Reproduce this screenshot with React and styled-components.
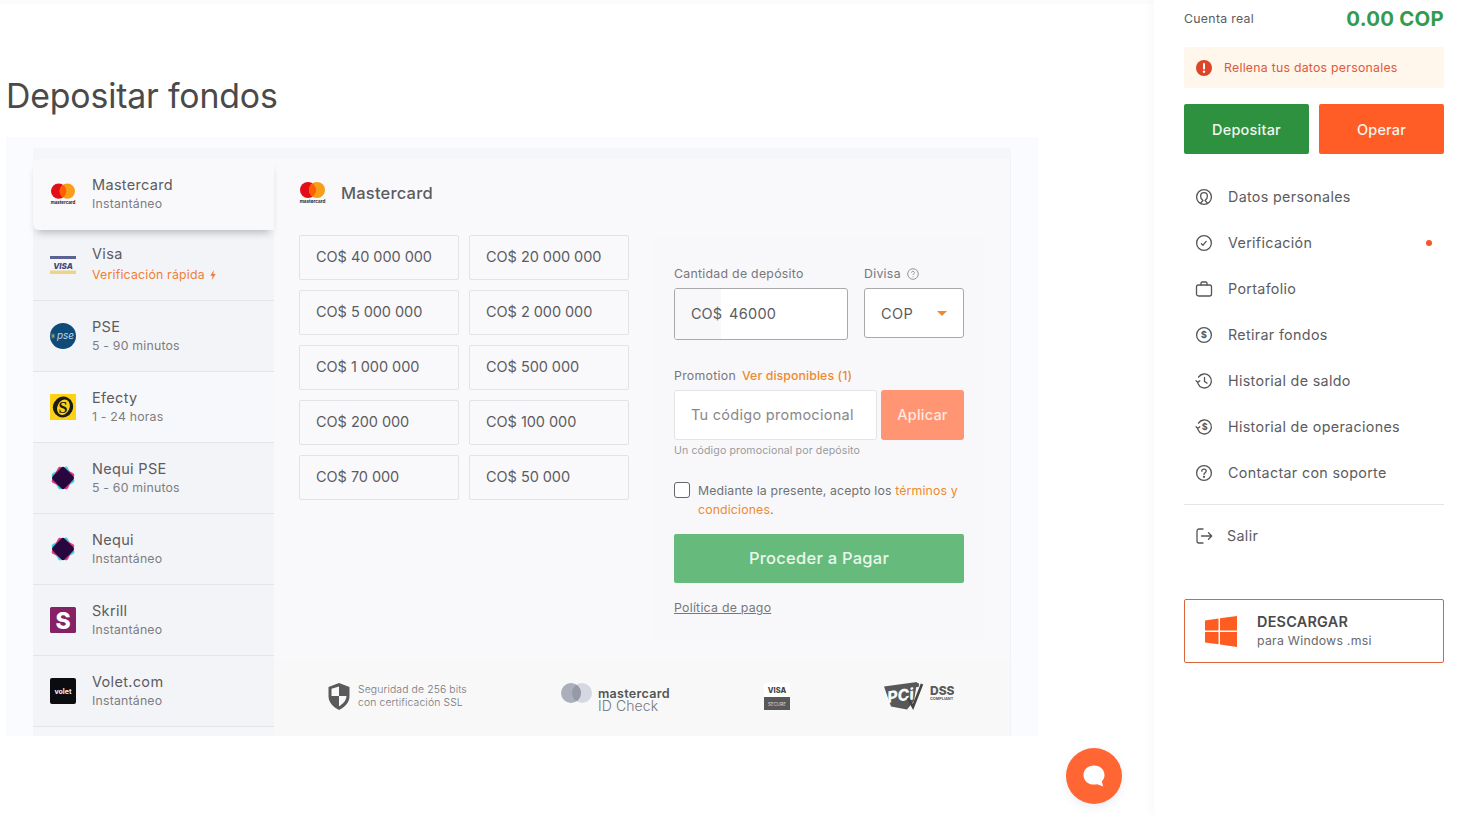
import React from "react";
import styled, { createGlobalStyle } from "styled-components";

const Global = createGlobalStyle`
  html, body { margin: 0; padding: 0; background: #fff; }
  body { font-family: Inter, "Open Sans", "Liberation Sans", sans-serif; color: #555; overflow: hidden; }
  * { box-sizing: border-box; }
`;

const Page = styled.div`display: flex; width: 1460px; height: 816px; overflow: hidden; position: relative; background: #fff;`;
const Main = styled.main`width: 1154px; flex: none; background: #fff;`;
const TopStrip = styled.div`height: 4px; background: #fbfbfb;`;
const Title = styled.h1`margin: 72px 0 21px 6px; height: 40px; font-size: 33.8px; line-height: 40px; font-weight: 400; letter-spacing: -0.15px; color: #4a4a4a;`;
const Outer = styled.section`margin-left: 6px; width: 1032px; height: 599px; background: #fafbfe; padding: 11px 27px 0;`;
const Inner = styled.div`display: flex; height: 588px; background: #f5f6f9; padding-top: 11px;`;

const MethodList = styled.div`width: 241px; flex: none; display: flex; flex-direction: column;`;
const Method = styled.div`
  height: 71px; flex: none; display: flex; align-items: center; gap: 16px; padding: 0 0 0 17px;
  background: ${p => (p.$active ? "#f9f9fc" : p.$light ? "#f7f8fb" : "#f3f4f8")};
  border-bottom: 1px solid ${p => (p.$active ? "transparent" : "#e3e4e8")};
  ${p => p.$active && "border-radius: 6px 0 0 6px; box-shadow: 0 6px 8px -4px rgba(0,0,0,.28); position: relative;"}
`;
const MethodIcon = styled.div`width: 26px; height: 26px; flex: none; display: flex; align-items: center; justify-content: center; svg { display: block; }`;
const MethodText = styled.div`display: flex; flex-direction: column; gap: 2px;`;
const MethodName = styled.span`font-size: 14.5px; line-height: 18px; color: #5c5c5f; letter-spacing: 0.32px;`;
const MethodSub = styled.span`
  font-size: 12.3px; line-height: 16px; letter-spacing: 0.2px; display: flex; align-items: center; gap: 5px;
  color: ${p => (p.$orange ? "#ee7f35" : "#7d7d80")};
  ${p => p.$orange && "margin: 2px 0;"}
`;

const Content = styled.div`flex: 1; display: flex; flex-direction: column; background: #f9f9fc; border-right: 1px solid #f1f2f5;`;
const ContentHead = styled.div`height: 76px; flex: none; padding: 0 25px 8px; display: flex; align-items: center; gap: 15px;`;
const ContentTitle = styled.h2`margin: 0; font-size: 16.5px; font-weight: 500; color: #5c5c5f; letter-spacing: 0.2px;`;
const ContentBody = styled.div`flex: none; height: 405px; padding: 0 0 0 25px; display: flex; gap: 25px;`;
const AmountGrid = styled.div`width: 330px; flex: none; display: grid; grid-template-columns: 160px 160px; grid-auto-rows: 45px; gap: 10px; align-content: start;`;
const AmountBtn = styled.button`
  font: inherit; font-size: 14.5px; letter-spacing: -0.05px; color: #5c5c5f; text-align: left; padding: 0 0 2px 16px;
  background: #f9f9fc; border: 1px solid #e2e3e7; border-radius: 2px;
`;

const FormPanel = styled.div`width: 330px; flex: none; background: #f8f8fa; padding: 30px 20px 0; display: flex; flex-direction: column;`;
const FieldRow = styled.div`display: flex; gap: 16px;`;
const Field = styled.div`width: ${p => p.$w}px; flex: none;`;
const Label = styled.div`height: 16px; margin-bottom: 7px; padding-top: 2px; font-size: 12.3px; line-height: 14px; letter-spacing: 0.28px; color: #77777a; display: flex; align-items: center; gap: 6px; white-space: nowrap;`;
const Orange = styled.span`color: #ee8a2e; font-weight: ${p => p.$bold ? 500 : 400};`;
const PromoOrange = styled(Orange)`letter-spacing: .1px;`;
const AmountBox = styled.div`height: 52px; border: 1px solid #a9a9ac; border-radius: 3px; background: #fff; display: flex; overflow: hidden;`;
const Prefix = styled.div`width: 46px; flex: none; background: #f8f8fb; padding: 0 0 2px 16px; display: flex; align-items: center; font-size: 14.5px; color: #5c5c5f; white-space: nowrap;`;
const AmountVal = styled.div`padding: 0 0 1px 8px; display: flex; align-items: center; font-size: 14.5px; letter-spacing: .3px; color: #5c5c5f;`;
const SelectBox = styled.div`height: 50px; border: 1px solid #a9a9ac; border-radius: 3px; background: #fff; display: flex; align-items: center; justify-content: space-between; padding: 0 16px; font-size: 14.5px; color: #5c5c5f; letter-spacing: .4px;`;
const Caret = styled.span`width: 0; height: 0; border-left: 5px solid transparent; border-right: 5px solid transparent; border-top: 5px solid #ee8a2e;`;
const PromoLabel = styled(Label)`margin-top: 27px;`;
const PromoRow = styled.div`display: flex; gap: 4px;`;
const PromoInput = styled.div`width: 203px; height: 50px; background: #fff; border: 1px solid #e4e4e7; border-radius: 3px; display: flex; align-items: center; padding: 0 0 2px 16px; font-size: 14.5px; letter-spacing: .28px; color: #88888b; white-space: nowrap;`;
const ApplyBtn = styled.button`width: 83px; height: 50px; border: 0; border-radius: 3px; padding: 0 0 2px; background: #ff9573; color: #ffe9e0; font: inherit; font-size: 14.5px; letter-spacing: .2px; font-weight: 500;`;
const Note = styled.div`margin-top: 4px; height: 14px; font-size: 10.6px; line-height: 14px; letter-spacing: .1px; color: #9a9a9d; white-space: nowrap;`;
const CheckRow = styled.div`margin-top: 23px; display: flex; gap: 8px;`;
const Check = styled.div`width: 16px; height: 16px; flex: none; margin-top: 1px; border: 1px solid #66666a; border-radius: 3px; background: #fff;`;
const CheckText = styled.div`font-size: 12.3px; line-height: 19px; letter-spacing: .14px; color: #717174;`;
const PayBtn = styled.button`margin-top: 15px; height: 49px; border: 0; border-radius: 2px; padding: 0 0 2px; background: #66bb7c; color: #e9f7ec; font: inherit; font-size: 16.5px; font-weight: 500; letter-spacing: .25px;`;
const PayLink = styled.a`margin-top: 17px; font-size: 12.3px; line-height: 16px; letter-spacing: .25px; color: #77777a; text-decoration: underline;`;

const Footer = styled.div`margin-top: 20px; flex: 1; background: #f8f8f8; display: flex; align-items: center; justify-content: space-between; padding: 0 54px 4px 54px;`;
const Trust = styled.div`display: flex; align-items: center; gap: 8px;`;
const TrustText = styled.div`font-size: 10.4px; line-height: 13px; font-weight: 300; color: #77777a; letter-spacing: .12px; white-space: nowrap;`;
const IdGroup = styled.div`height: 28px; display: flex; align-items: flex-start; gap: 6px; svg { margin-top: 1px; }`;
const IdText = styled.div`margin-top: 5px; display: flex; flex-direction: column;`;
const IdStrong = styled.span`font-weight: 600; font-size: 12.6px; line-height: 13px; color: #555; letter-spacing: .25px;`;
const IdLight = styled.span`font-weight: 300; font-size: 14px; line-height: 11px; color: #77777a; letter-spacing: .1px;`;

const Sidebar = styled.aside`width: 306px; flex: none; background: #fff; padding: 0 16px 0 30px; box-shadow: -4px 0 8px rgba(0,0,0,.025);`;
const Balance = styled.div`height: 36px; display: flex; align-items: center; justify-content: space-between;`;
const BalanceLabel = styled.span`font-size: 12.3px; letter-spacing: .3px; color: #5c5c5f;`;
const BalanceVal = styled.strong`font-size: 20.4px; font-weight: 700; color: #349b4e; letter-spacing: .25px;`;
const Alert = styled.div`margin-top: 11px; height: 41px; background: #fff6ec; border-radius: 2px; display: flex; align-items: center; gap: 12px; padding-left: 12px; font-size: 12.3px; letter-spacing: .25px; color: #dd5a3a; white-space: nowrap;`;
const Actions = styled.div`margin-top: 16px; display: flex; gap: 10px;`;
const ActionBtn = styled.button`width: 125px; height: 50px; border: 0; border-radius: 2px; padding: 0; background: ${p => p.$bg}; color: #f2f6ee; font: inherit; font-size: 14.5px; font-weight: 500; letter-spacing: .2px;`;
const Menu = styled.nav`margin-top: 20px; display: flex; flex-direction: column;`;
const MenuRow = styled.div`height: 46px; display: flex; align-items: center; gap: ${p => p.$gap || 15}px; padding: 0 12px 0 11px; font-size: 14.3px; letter-spacing: .33px; color: #5c5c5f; svg { flex: none; }`;
const MenuLabel = styled.span`padding-bottom: 2px;`;
const Dot = styled.span`margin-left: auto; width: 6px; height: 6px; border-radius: 50%; background: #f4562a;`;
const Divider = styled.hr`margin: 8px 0; height: 1px; border: 0; background: #e5e5e8;`;
const Download = styled.div`margin-top: 40px; height: 64px; border: 1px solid #d9663b; border-radius: 2px; display: flex; align-items: center; gap: 20px; padding-left: 20px;`;
const DownloadText = styled.div`display: flex; flex-direction: column; gap: 2px;`;
const DownloadTitle = styled.strong`font-size: 14.4px; line-height: 18px; font-weight: 600; letter-spacing: .25px; color: #4a4a4a;`;
const DownloadSub = styled.span`font-size: 12.3px; line-height: 16px; letter-spacing: .25px; color: #68686b;`;
const Fab = styled.button`position: absolute; left: 1066px; top: 748px; width: 56px; height: 56px; border: 0; padding: 0; border-radius: 50%; background: #ff6633; box-shadow: 0 3px 10px rgba(60,80,140,.1); display: flex; align-items: center; justify-content: center;`;

const MastercardLogo = () => (
  <svg width="27" height="22" viewBox="0 0 27 22">
    <circle cx="9" cy="8" r="8" fill="#e30d17" />
    <circle cx="18" cy="8" r="8" fill="#f79e1b" />
    <path d="M13.5 1.4a8 8 0 0 1 0 13.2a8 8 0 0 1 0-13.2z" fill="#ff5f00" />
    <text x="13.5" y="21" textAnchor="middle" fontSize="4.6" fontWeight="700" fill="#222" fontFamily="Inter, sans-serif">mastercard</text>
  </svg>
);
const VisaLogo = () => (
  <svg width="26" height="18" viewBox="0 0 26 18">
    <rect width="26" height="18" fill="#f4f5f8" />
    <rect width="26" height="3" fill="#5b6393" />
    <rect y="14.5" width="26" height="3.5" fill="#efd487" />
    <text x="13" y="12.5" textAnchor="middle" fontSize="8" fontWeight="800" fontStyle="italic" fill="#39467f" fontFamily="Inter, sans-serif">VISA</text>
  </svg>
);
const PseLogo = () => (
  <svg width="26" height="26" viewBox="0 0 26 26">
    <circle cx="13" cy="13" r="13" fill="#0f4a78" />
    <path d="M1 13h4M3 10.500v5M1.500 11l3 4M4.500 11l-3 4" stroke="#b9b55a" strokeWidth=".6" />
    <text x="15.500" y="16" textAnchor="middle" fontSize="10" fontStyle="italic" fill="#bcd6ea" fontFamily="Inter, sans-serif">pse</text>
  </svg>
);
const EfectyLogo = () => (
  <svg width="26" height="26" viewBox="0 0 26 26">
    <rect width="26" height="26" fill="#fcd116" />
    <ellipse cx="13" cy="13" rx="10" ry="10.500" fill="#1d1b12" transform="rotate(25 13 13)" />
    <ellipse cx="13.500" cy="13" rx="6" ry="8" fill="#fcd116" transform="rotate(25 13 13)" />
    <text x="13" y="19" textAnchor="middle" fontSize="16" fontWeight="800" fill="#1d1b12" fontFamily="Liberation Serif, serif">S</text>
  </svg>
);
const NequiLogo = () => (
  <svg width="26" height="26" viewBox="0 0 26 26">
    <rect x="4" y="4" width="18" height="18" rx="2.500" fill="#35d2dc" transform="rotate(62 13 13)" />
    <rect x="4" y="4" width="18" height="18" rx="2.500" fill="#dc3d82" transform="rotate(27 13 13)" />
    <rect x="4.500" y="4.500" width="17" height="17" rx="2.500" fill="#28073f" transform="rotate(45 13 13)" />
  </svg>
);
const SkrillLogo = () => (
  <svg width="26" height="26" viewBox="0 0 26 26">
    <rect width="26" height="26" rx="1.500" fill="#862165" />
    <text x="13" y="21.500" textAnchor="middle" fontSize="23" fontWeight="800" fill="#fff" fontFamily="Inter, sans-serif">S</text>
  </svg>
);
const VoletLogo = () => (
  <svg width="26" height="26" viewBox="0 0 26 26">
    <rect width="26" height="26" rx="2" fill="#0c0c10" />
    <text x="13" y="15.500" textAnchor="middle" fontSize="7" fontWeight="700" fill="#f2f2f2" fontFamily="Inter, sans-serif">volet</text>
  </svg>
);
const Bolt = () => (
  <svg width="6" height="10" viewBox="0 0 6 10">
    <path d="M3.800 0L.3 5.700h2.200L1.900 10 5.700 4H3.300z" fill="#ee7f35" />
  </svg>
);

const Ic = ({ children, size = 18 }) => (
  <svg width={size} height={size} viewBox="0 0 18 18" fill="none" stroke="#555558" strokeWidth="1.300" strokeLinecap="round" strokeLinejoin="round">{children}</svg>
);
const icons = {
  user: <Ic><circle cx="9" cy="9" r="7.400" /><path d="M5.500 15.500c.6-1.500 1.500-2 2.500-3-1.500-1-2.400-2.600-2.400-4.300 0-2 1.500-3.600 3.400-3.600s3.400 1.600 3.400 3.600c0 1.700-.9 3.300-2.400 4.300 1 1 1.900 1.500 2.500 3" /></Ic>,
  check: <Ic><circle cx="9" cy="9" r="7.400" /><path d="M6.400 9.800l1.600 1.400 3.200-3.800" /></Ic>,
  bag: <Ic><rect x="1.500" y="5" width="15" height="11" rx="2" /><path d="M6 5V3.200c0-.7.500-1.200 1.200-1.200h3.600c.7 0 1.200.5 1.200 1.200V5" /></Ic>,
  dollar: <Ic><circle cx="9" cy="9" r="7.400" /><text x="9" y="12.400" textAnchor="middle" fontSize="9.500" fontWeight="700" stroke="none" fill="#555558" fontFamily="Inter, sans-serif">$</text></Ic>,
  clock: <Ic><path d="M3.500 5.200A7 7 0 1 1 2.900 11.500" /><path d="M1 8.600l1.800 1.900 2-1.700" /><path d="M9.500 5.500v4l2.500 1.600" /></Ic>,
  clockDollar: <Ic><path d="M3.500 5.200A7 7 0 1 1 2.900 11.500" /><path d="M1 8.600l1.800 1.900 2-1.700" /><text x="9.800" y="12.300" textAnchor="middle" fontSize="9" fontWeight="700" stroke="none" fill="#555558" fontFamily="Inter, sans-serif">$</text></Ic>,
  help: <Ic><circle cx="9" cy="9" r="7.400" /><path d="M6.800 7.200c0-1.300 1-2.100 2.200-2.100s2.200.8 2.200 2c0 1.700-2.200 1.700-2.200 3.400" /><circle cx="9" cy="12.800" r=".5" fill="#555558" /></Ic>,
  out: <Ic><path d="M8 2H4a2 2 0 0 0-2 2v10a2 2 0 0 0 2 2h4" /><path d="M6.500 9h10M13.500 5.800L16.700 9l-3.200 3.200" /></Ic>,
};

const methods = [
  ["Mastercard", "Instantáneo", <MastercardLogo />],
  ["Visa", "Verificación rápida", <VisaLogo />, true],
  ["PSE", "5 - 90 minutos", <PseLogo />],
  ["Efecty", "1 - 24 horas", <EfectyLogo />],
  ["Nequi PSE", "5 - 60 minutos", <NequiLogo />],
  ["Nequi", "Instantáneo", <NequiLogo />],
  ["Skrill", "Instantáneo", <SkrillLogo />],
  ["Volet.com", "Instantáneo", <VoletLogo />],
];
const amounts = ["40 000 000", "20 000 000", "5 000 000", "2 000 000", "1 000 000", "500 000", "200 000", "100 000", "70 000", "50 000"];
const menu = [
  ["user", "Datos personales"],
  ["check", "Verificación", true],
  ["bag", "Portafolio"],
  ["dollar", "Retirar fondos"],
  ["clock", "Historial de saldo"],
  ["clockDollar", "Historial de operaciones"],
  ["help", "Contactar con soporte"],
];

export default function App() {
  return (
    <Page>
      <Global />
      <Main>
        <TopStrip />
        <Title>Depositar fondos</Title>
        <Outer>
          <Inner>
            <MethodList>
              {methods.map(([name, sub, logo, orange], i) => (
                <Method key={name} $active={i === 0} $light={i === 3}>
                  <MethodIcon>{logo}</MethodIcon>
                  <MethodText>
                    <MethodName>{name}</MethodName>
                    <MethodSub $orange={orange}>{sub}{orange && <Bolt />}</MethodSub>
                  </MethodText>
                </Method>
              ))}
            </MethodList>
            <Content>
              <ContentHead>
                <MastercardLogo />
                <ContentTitle>Mastercard</ContentTitle>
              </ContentHead>
              <ContentBody>
                <AmountGrid>
                  {amounts.map(a => <AmountBtn key={a}>CO$ {a}</AmountBtn>)}
                </AmountGrid>
                <FormPanel>
                  <FieldRow>
                    <Field $w={174}>
                      <Label>Cantidad de depósito</Label>
                      <AmountBox>
                        <Prefix>CO$</Prefix>
                        <AmountVal>46000</AmountVal>
                      </AmountBox>
                    </Field>
                    <Field $w={100}>
                      <Label>Divisa
                        <svg width="12" height="12" viewBox="0 0 12 12" fill="none" stroke="#8a8a8d" strokeWidth=".9">
                          <circle cx="6" cy="6" r="5.300" />
                          <path d="M4.500 4.700c0-.9.700-1.400 1.500-1.400s1.500.5 1.500 1.300c0 1.100-1.500 1.100-1.500 2.300M6 8.300v.8" />
                        </svg>
                      </Label>
                      <SelectBox>COP<Caret /></SelectBox>
                    </Field>
                  </FieldRow>
                  <PromoLabel>Promotion <PromoOrange $bold>Ver disponibles (1)</PromoOrange></PromoLabel>
                  <PromoRow>
                    <PromoInput>Tu código promocional</PromoInput>
                    <ApplyBtn>Aplicar</ApplyBtn>
                  </PromoRow>
                  <Note>Un código promocional por depósito</Note>
                  <CheckRow>
                    <Check />
                    <CheckText>Mediante la presente, acepto los <Orange>términos y condiciones</Orange>.</CheckText>
                  </CheckRow>
                  <PayBtn>Proceder a Pagar</PayBtn>
                  <PayLink>Política de pago</PayLink>
                </FormPanel>
              </ContentBody>
              <Footer>
                <Trust>
                  <svg width="22" height="27" viewBox="0 0 22 27">
                    <path d="M11 0L21.500 4v9c0 6.500-4.500 11-10.500 14C5 24 .5 19.500.5 13V4z" fill="#5a5a5c" />
                    <path d="M11 3.500v9.500H3.500V5.800zM11 13h7.500c-.3 4.500-3.500 8-7.500 10.300z" fill="#f8f8f8" />
                  </svg>
                  <TrustText>Seguridad de 256 bits<br />con certificación SSL</TrustText>
                </Trust>
                <IdGroup>
                  <svg width="31" height="20" viewBox="0 0 31 20">
                    <circle cx="21" cy="10" r="10" fill="#d5d8e2" />
                    <circle cx="10" cy="10" r="10" fill="#abaebb" />
                    <path d="M15.500 1.700a10 10 0 0 1 0 16.600a10 10 0 0 1 0-16.600z" fill="#9699a8" />
                  </svg>
                  <IdText>
                    <IdStrong>mastercard</IdStrong>
                    <IdLight>ID Check</IdLight>
                  </IdText>
                </IdGroup>
                <svg width="26" height="27" viewBox="0 0 26 27">
                  <rect width="26" height="14" fill="#fff" />
                  <rect y="14" width="26" height="13" fill="#58585a" />
                  <text x="13" y="10" textAnchor="middle" fontSize="7.500" fontWeight="800" fill="#444" fontFamily="Inter, sans-serif">VISA</text>
                  <text x="13" y="22.500" textAnchor="middle" fontSize="4.500" fill="#ddd" fontFamily="Inter, sans-serif">SECURE</text>
                </svg>
                <svg width="72" height="28" viewBox="0 0 72 28">
                  <path d="M0 4.500L33 0l-3 19-7 8.500-16-3z" fill="#58585a" />
                  <text x="4" y="21" fontSize="16" fontWeight="800" fontStyle="italic" fill="#f8f8f8" fontFamily="Inter, sans-serif" transform="rotate(-8 4 21)">PCi</text>
                  <path d="M24 16l5 9 9-23" fill="none" stroke="#444" strokeWidth="2.600" />
                  <circle cx="33" cy="3" r="2.200" fill="#58585a" />
                  <text x="46" y="13" fontSize="12" fontWeight="800" fill="#58585a" fontFamily="Inter, sans-serif">DSS</text>
                  <text x="46" y="18" fontSize="3.800" fontWeight="700" fill="#58585a" fontFamily="Inter, sans-serif">COMPLIANT</text>
                </svg>
              </Footer>
            </Content>
          </Inner>
        </Outer>
      </Main>
      <Sidebar>
        <Balance>
          <BalanceLabel>Cuenta real</BalanceLabel>
          <BalanceVal>0.00 COP</BalanceVal>
        </Balance>
        <Alert>
          <svg width="16" height="16" viewBox="0 0 16 16">
            <circle cx="8" cy="8" r="8" fill="#dc4528" />
            <rect x="7" y="3" width="2" height="6.500" rx="1" fill="#fff" />
            <circle cx="8" cy="11.800" r="1.200" fill="#fff" />
          </svg>
          Rellena tus datos personales
        </Alert>
        <Actions>
          <ActionBtn $bg="#2d9140">Depositar</ActionBtn>
          <ActionBtn $bg="#ff5c26">Operar</ActionBtn>
        </Actions>
        <Menu>
          {menu.map(([ic, label, dot]) => (
            <MenuRow key={label}>
              {icons[ic]}
              <MenuLabel>{label}</MenuLabel>
              {dot && <Dot />}
            </MenuRow>
          ))}
          <Divider />
          <MenuRow $gap={14}>{icons.out}<MenuLabel>Salir</MenuLabel></MenuRow>
        </Menu>
        <Download>
          <svg width="32" height="31" viewBox="0 0 32 31">
            <path d="M0 4.500L13.500 2.500v12H0zM15 2.300L32 0v14.500H15zM0 16h13.500v12.300L0 26.500zM15 16h17v15l-17-2.500z" fill="#ff5c22" />
          </svg>
          <DownloadText>
            <DownloadTitle>DESCARGAR</DownloadTitle>
            <DownloadSub>para Windows .msi</DownloadSub>
          </DownloadText>
        </Download>
      </Sidebar>
      <Fab aria-label="Chat">
        <svg width="24" height="24" viewBox="0 0 24 24">
          <path d="M12 1.500c6 0 10.500 4 10.500 9.500 0 2.700-1 4.800-2.700 6.400l1.400 5.100-6-2.300c-1 .3-2 .4-3.200.4-6 0-10.500-4-10.500-9.600S6 1.500 12 1.500z" fill="#fff" />
        </svg>
      </Fab>
    </Page>
  );
}
